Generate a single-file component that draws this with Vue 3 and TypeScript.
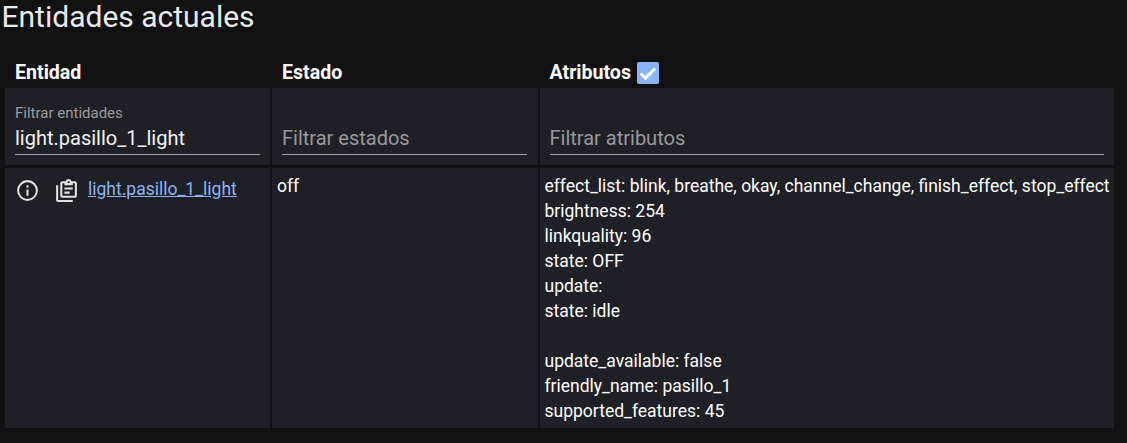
<script setup lang="ts">
const attributes: string[] = [
  'effect_list: blink, breathe, okay, channel_change, finish_effect, stop_effect',
  'brightness: 254',
  'linkquality: 96',
  'state: OFF',
  'update:',
  'state: idle',
  '',
  'update_available: false',
  'friendly_name: pasillo_1',
  'supported_features: 45',
]
</script>

<template>
  <main class="page">
    <h1 class="title">Entidades actuales</h1>
    <table class="states">
      <colgroup>
        <col class="col-entity" />
        <col class="col-state" />
        <col />
      </colgroup>
      <thead>
        <tr class="head">
          <th>Entidad</th>
          <th>Estado</th>
          <th>
            <span class="attr-head">
              Atributos
              <span class="check">
                <svg viewBox="0 0 22 22" width="22" height="22">
                  <path d="M3.8 11.5l4.7 4.6 9.6-9.6" fill="none" stroke="#fff" stroke-width="3" />
                </svg>
              </span>
            </span>
          </th>
        </tr>
      </thead>
      <tbody>
        <tr class="filters">
          <td>
            <div class="field has-value">
              <label>Filtrar entidades</label>
              <span class="value">light.pasillo_1_light</span>
            </div>
          </td>
          <td class="state-filter">
            <div class="field"><span class="placeholder">Filtrar estados</span></div>
          </td>
          <td>
            <div class="field"><span class="placeholder">Filtrar atributos</span></div>
          </td>
        </tr>
        <tr class="data">
          <td>
            <div class="entity">
              <svg class="icon info" viewBox="0 0 24 24" width="25" height="25">
                <path fill="#e1e1e1" d="M11 9h2V7h-2m1 13c-4.41 0-8-3.59-8-8s3.59-8 8-8 8 3.59 8 8-3.59 8-8 8m0-18A10 10 0 0 0 2 12a10 10 0 0 0 10 10 10 10 0 0 0 10-10A10 10 0 0 0 12 2m-1 15h2v-6h-2v6z" />
              </svg>
              <svg class="icon clip" viewBox="0 0 24 24" width="25" height="25">
                <path fill="#e1e1e1" d="M4 7v14h14v2H4a2 2 0 0 1-2-2V7h2m16-4a2 2 0 0 1 2 2v12a2 2 0 0 1-2 2H8a2 2 0 0 1-2-2V5a2 2 0 0 1 2-2h3.18A3 3 0 0 1 14 1a3 3 0 0 1 2.82 2H20m-6 0a1 1 0 0 0-1 1 1 1 0 0 0 1 1 1 1 0 0 0 1-1 1 1 0 0 0-1-1m-4 4V5H8v12h12V5h-2v2h-8m0 2h8v2h-8V9m0 4h5v2h-5v-2z" />
              </svg>
              <a class="link" href="#">light.pasillo_1_light</a>
            </div>
          </td>
          <td class="state">off</td>
          <td class="attrs">
            <div v-for="(line, i) in attributes" :key="i" class="attr-line">{{ line }}</div>
          </td>
        </tr>
      </tbody>
    </table>
  </main>
</template>

<style>
html, body { margin: 0; background: #111111; }
</style>

<style scoped>
.page {
  height: 443px;
  overflow: hidden;
  background: #111111;
  color: #e1e1e1;
  font-family: Roboto, sans-serif;
  box-sizing: border-box;
}
.title {
  margin: 0 0 0 1.5px;
  font-size: 30px;
  line-height: 34px;
  font-weight: 400;
  color: #e8eaed;
}
.states {
  margin: 18px 0 0 3px;
  width: 1113px;
  table-layout: fixed;
  border-collapse: separate;
  border-spacing: 2.5px 3px;
}
.col-entity { width: 265px; }
.col-state { width: 265.5px; }
th {
  box-sizing: border-box;
  text-align: left;
  height: 30px;
  padding: 4px 10px 0;
  font-size: 19.6px;
  font-weight: 700;
  color: #fff;
}
.attr-head { display: inline-flex; align-items: center; gap: 6px; }
.check {
  width: 22px;
  height: 22px;
  border-radius: 2px;
  background: #8ab4f8;
  display: inline-flex;
  position: relative;
  top: 1px;
}
td {
  box-sizing: border-box;
  background: #1f2025;
  vertical-align: top;
}
.filters td { height: 77px; padding: 0 10px; }
.filters td.state-filter { padding-right: 11px; }
.field {
  height: 67px;
  border-bottom: 1px solid #a0a0a0;
  box-sizing: border-box;
  position: relative;
  display: flex;
  align-items: flex-end;
  padding-bottom: 2px;
}
.field label {
  position: absolute;
  top: 16px;
  left: 0;
  font-size: 15px;
  line-height: 18px;
  color: #9a9b9d;
}
.value { font-size: 20px; line-height: 28px; color: #f1f1f1; }
.placeholder { font-size: 20px; line-height: 28px; color: #98999b; }
.data td { height: 260px; padding: 8px 5px 0; }
.entity { display: flex; align-items: flex-start; padding-left: 5px; }
.icon { flex: none; margin-top: 2px; }
.clip { margin-left: 14px; margin-right: 9px; }
.link { color: #8ab4f8; font-size: 17.5px; line-height: 26px; }
.data td.state { font-size: 17.5px; line-height: 20px; color: #fff; padding-top: 8px; }
.data td.attrs { padding-top: 6px; }
.attr-line { font-size: 17.5px; line-height: 25px; min-height: 25px; color: #fff; white-space: nowrap; }
</style>
